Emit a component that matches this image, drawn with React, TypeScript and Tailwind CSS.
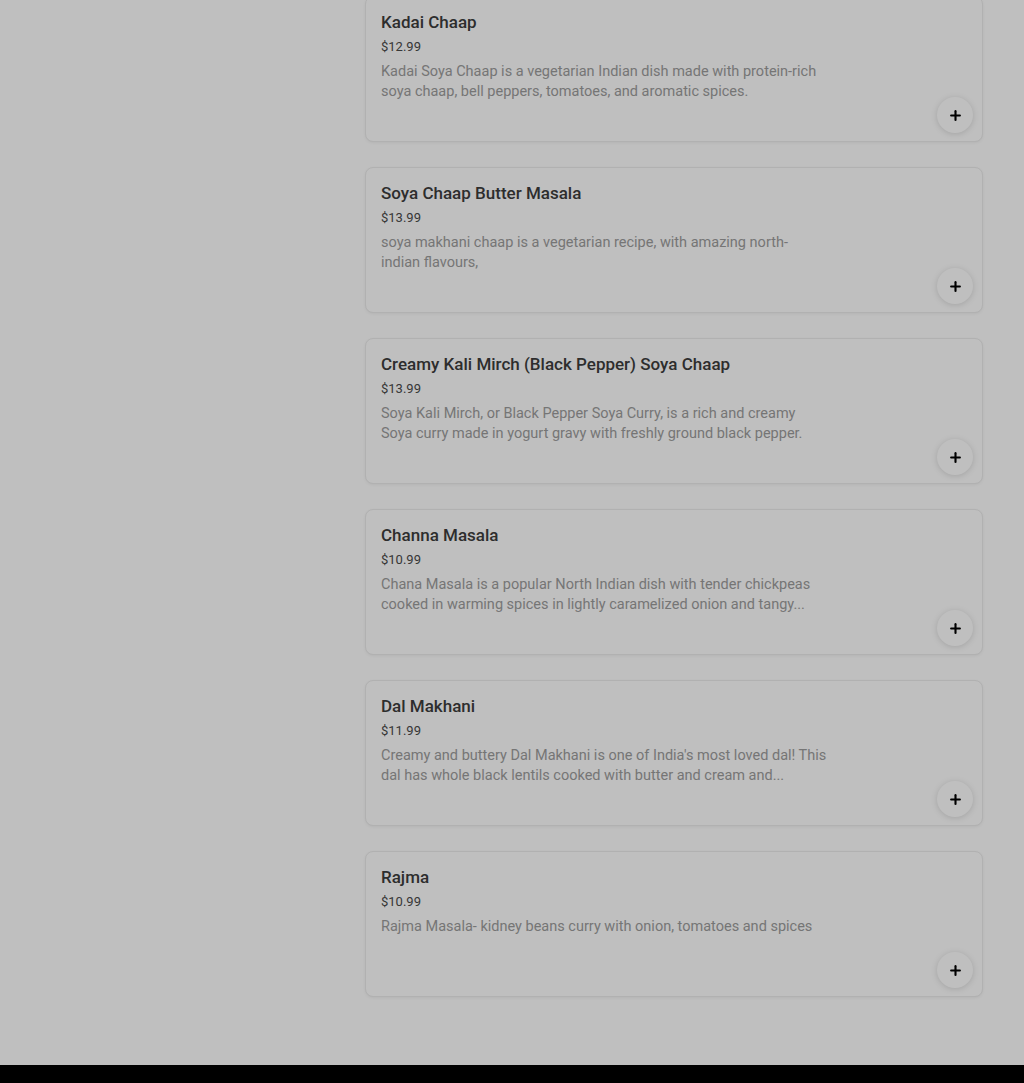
import React from 'react';
import { Plus } from 'lucide-react';

type Dish = {
    name: string;
    price: string;
    description: string;
};

const dishes: Dish[] = [
    {
        name: 'Kadai Chaap',
        price: '$12.99',
        description: 'Kadai Soya Chaap is a vegetarian Indian dish made with protein-rich soya chaap, bell peppers, tomatoes, and aromatic spices.',
    },
    {
        name: 'Soya Chaap Butter Masala',
        price: '$13.99',
        description: 'soya makhani chaap is a vegetarian recipe, with amazing north-\nindian flavours,',
    },
    {
        name: 'Creamy Kali Mirch (Black Pepper) Soya Chaap',
        price: '$13.99',
        description: 'Soya Kali Mirch, or Black Pepper Soya Curry, is a rich and creamy Soya curry made in yogurt gravy with freshly ground black pepper.',
    },
    {
        name: 'Channa Masala',
        price: '$10.99',
        description: 'Chana Masala is a popular North Indian dish with tender chickpeas cooked in warming spices in lightly caramelized onion and tangy...',
    },
    {
        name: 'Dal Makhani',
        price: '$11.99',
        description: "Creamy and buttery Dal Makhani is one of India's most loved dal! This dal has whole black lentils cooked with butter and cream and...",
    },
    {
        name: 'Rajma',
        price: '$10.99',
        description: 'Rajma Masala- kidney beans curry with onion, tomatoes and spices',
    },
];

function DishCard({ dish }: { dish: Dish }) {
    return (
        <div className="relative h-[146px] rounded-lg border border-[#ececec] bg-white px-[15px] pt-[13px] shadow-[0_1px_3px_rgba(0,0,0,0.06)]">
            <h3 className="text-[17px] leading-6 font-medium text-[#3d3d3d]">{dish.name}</h3>
            <p className="mt-[3px] text-[13px] leading-5 text-[#4a4a4a]">{dish.price}</p>
            <p className="mt-[5px] w-[446px] whitespace-pre-line text-[14.5px] leading-5 text-[#9d9d9d]">
                {dish.description}
            </p>
            <button className="absolute right-[9px] bottom-2 flex h-9 w-9 items-center justify-center rounded-full bg-white shadow-[0_1px_6px_rgba(0,0,0,0.15)]">
                <Plus className="h-[15px] w-[15px] text-black" strokeWidth={3.4} />
            </button>
        </div>
    );
}

export default function App() {
    return (
        <div className="relative h-[1083px] overflow-hidden bg-white font-['Roboto','Liberation_Sans',sans-serif]">
            <div className="flex">
                {/* Sidebar column (empty at this scroll) */}
                <aside className="w-[365px] shrink-0" />

                {/* Menu list */}
                <main className="-mt-1 flex w-[618px] flex-col gap-[25px] pb-[68px]">
                    {dishes.map((dish) => (
                        <DishCard key={dish.name} dish={dish} />
                    ))}
                </main>
            </div>

            {/* Footer */}
            <footer className="h-[18px] bg-black" />

            {/* Modal backdrop */}
            <div className="pointer-events-none absolute inset-0 bg-black/25" />
        </div>
    );
}
